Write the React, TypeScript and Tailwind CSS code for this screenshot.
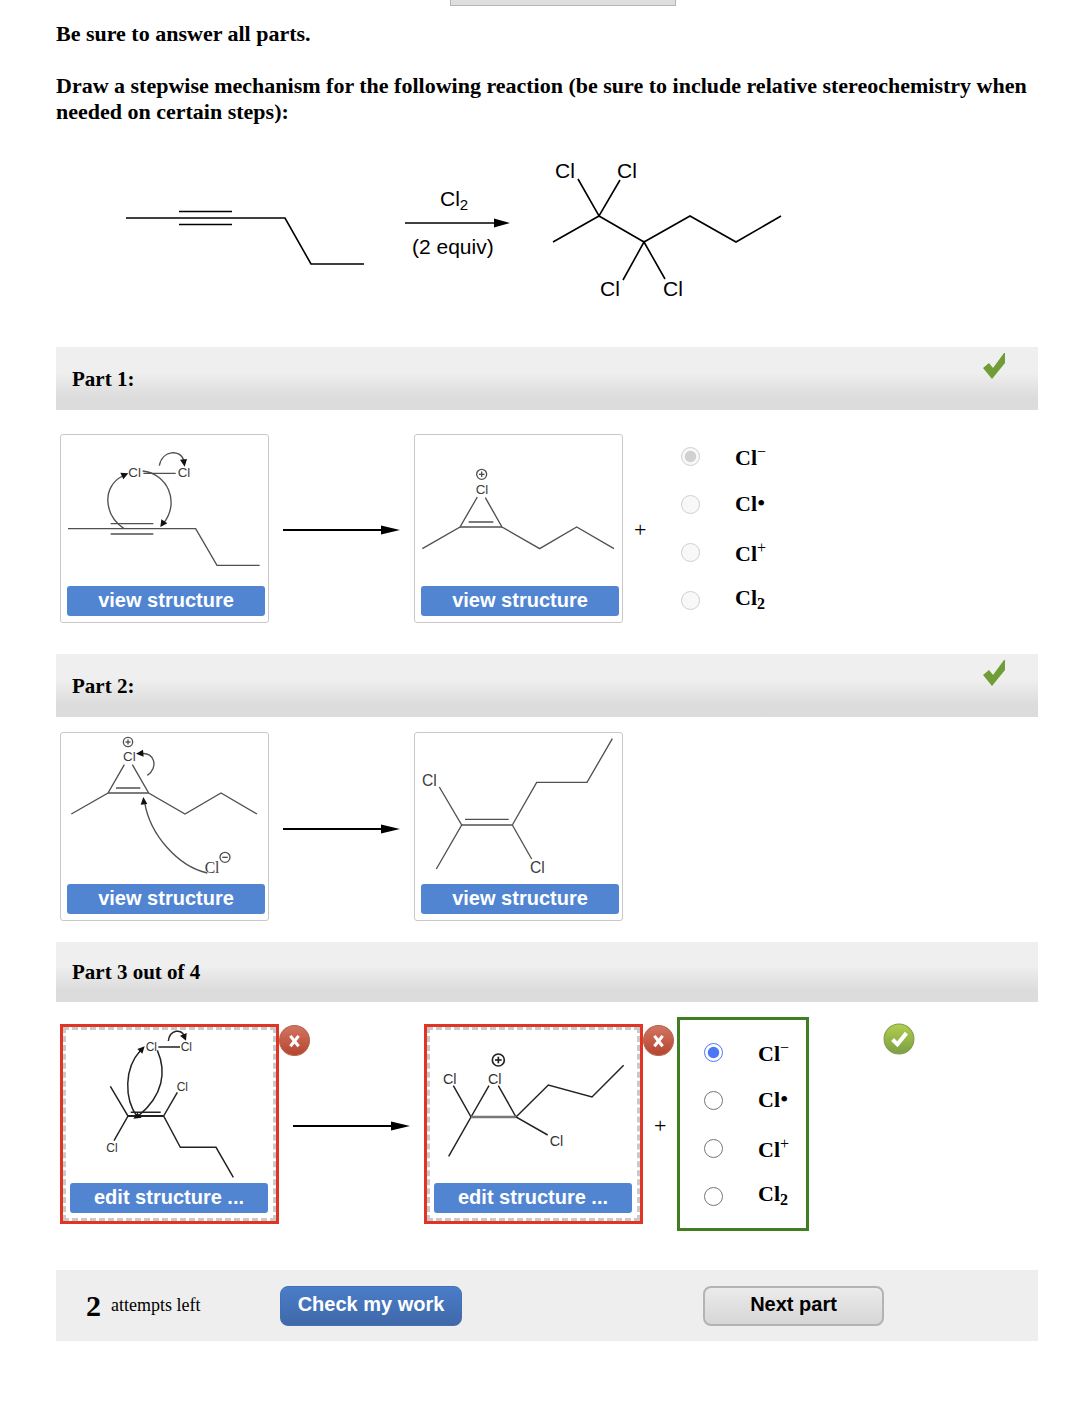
import { useState, type ReactNode } from 'react';

const SANS = "font-['Liberation_Sans',Arial,sans-serif]";

type Atom = { x: number; y: number; size: number; serif?: boolean };

/* ── Small drawing helpers for the structures ── */

function Cl({ x, y, size, serif }: Atom) {
  return (
    <text
      x={x}
      y={y}
      fontSize={size}
      stroke="none"
      fill="currentColor"
      className={serif ? "font-['Liberation_Serif',serif]" : SANS}
    >
      Cl
    </text>
  );
}

function Charge({ x, y, r, minus }: { x: number; y: number; r: number; minus?: boolean }) {
  const h = r * 0.55;
  return (
    <g>
      <circle cx={x} cy={y} r={r} />
      <path d={`M${x - h} ${y}h${h * 2}`} />
      {!minus && <path d={`M${x} ${y - h}v${h * 2}`} />}
    </g>
  );
}

function Head({ points }: { points: string }) {
  return <polygon points={points} fill="#111" stroke="none" />;
}

// Structures are drawn on a grid three times finer than the box they sit in
function Structure({ viewBox, label, dark, children }: { viewBox: string; label: string; dark?: boolean; children: ReactNode }) {
  return (
    <svg
      viewBox={viewBox}
      role="img"
      aria-label={label}
      className={dark ? 'block w-[198px] text-[#333]' : 'block w-[198px] text-[#3c3c3c]'}
      fill="none"
      stroke={dark ? '#222' : '#505050'}
      strokeWidth={dark ? 4.4 : 4}
    >
      {children}
    </svg>
  );
}

function AlkyneAttack() {
  return (
    <Structure viewBox="51 30 594 453" label="2-hexyne attacking chlorine">
      <path d="M54 311H437L501 421H629M182 296H310M182 327H310M280 145H377" />
      <Cl x={235} y={157} size={40} />
      <Cl x={383} y={157} size={40} />
      <path d="M222 311C160 268 156 184 218 153" />
      <Head points="235,145 211,143 220,163" />
      <path d="M278 138C352 146 390 230 342 293" />
      <Head points="331,306 334,283 352,295" />
      <path d="M328 122C336 75 392 72 401 106" />
      <Head points="404,125 390,104 411,102" />
    </Structure>
  );
}

function Chlorirenium() {
  return (
    <Structure viewBox="63 30 594 453" label="Chlorirenium ion">
      <path d="M67 371L180 306L232 216M256 218L306 306L419 371L530 306L642 371M206 291H280" />
      <path d="M180 306H306" strokeWidth={5} />
      <Cl x={227} y={207} size={40} />
      <Charge x={245} y={148} r={15} />
    </Structure>
  );
}

function ChlorideAttack() {
  return (
    <Structure viewBox="51 24 594 453" label="Chloride opening the chlorirenium ion">
      <path d="M64 267L174 204L223 119M247 119L296 204L405 267L513 204L621 267M198 189H271" />
      <path d="M174 204H296" strokeWidth={5} />
      <Cl x={219} y={108} size={40} />
      <Charge x={234} y={51} r={14} />
      <path d="M292 151C326 128 314 80 274 86" />
      <Head points="258,86 279,74 281,95" />
      <path d="M284 232C300 330 385 425 472 444" />
      <Head points="280,216 272,239 292,237" />
      <Cl x={464} y={443} size={47} serif />
      <Charge x={525} y={397} r={15} minus />
    </Structure>
  );
}

function Dichloroalkene() {
  return (
    <Structure viewBox="63 24 594 453" label="2,3-dichloro-2-hexene">
      <path d="M118 186L185 300L109 432M337 300L410 172H561L637 41M337 300L395 402M195 283H326" />
      <path d="M185 300H337" strokeWidth={5} />
      <Cl x={66} y={184} size={47} />
      <Cl x={390} y={444} size={47} />
    </Structure>
  );
}

function AlkeneAttack() {
  return (
    <Structure viewBox="60 45 594 459" label="Dichloroalkene attacking chlorine" dark>
      <path d="M181 214L234 303L192 377M382 232L341 303L391 397H498L550 487M242 292H332M325 96H390" />
      <path d="M234 303H341" strokeWidth={6} />
      <Cl x={287} y={108} size={36} />
      <Cl x={392} y={108} size={36} />
      <Cl x={380} y={228} size={36} />
      <Cl x={169} y={411} size={36} />
      <path d="M355 78C360 42 396 42 402 62" />
      <Head points="408,77 390,62 410,54" />
      <path d="M262 306C222 250 222 160 272 106" />
      <Head points="284,94 262,102 277,116" />
      <path d="M322 106C350 170 340 240 266 302" />
      <Head points="250,311 262,293 275,308" />
    </Structure>
  );
}

function ChloroniumProduct() {
  return (
    <Structure viewBox="57 45 594 459" label="Trichloro chloronium ion" dark>
      <path d="M115 212L168 306L101 424M222 212L168 306M250 212L303 306L398 360M303 306L400 210L531 246L626 151" />
      <path d="M168 306H303" strokeWidth={7} stroke="#777" />
      <Cl x={84} y={208} size={43} />
      <Cl x={219} y={208} size={43} />
      <Cl x={404} y={392} size={43} />
      <g strokeWidth={5}>
        <Charge x={250} y={135} r={18} />
      </g>
    </Structure>
  );
}

function ReactionScheme() {
  return (
    <svg
      viewBox="120 150 670 155"
      role="img"
      aria-label="2-hexyne with two equivalents of chlorine gives 2,2,3,3-tetrachlorohexane"
      className={`mt-[25px] ml-16 block w-[670px] max-w-full ${SANS}`}
      fill="none"
      stroke="#000"
      strokeWidth={1.6}
    >
      <path d="M126 218H285L311 264H364M179 211.5H232M179 224.5H232" />
      <path d="M405 223H496" />
      <polygon points="494,218.5 510,223 494,227.5" fill="#000" stroke="none" />
      <path d="M553 242L599 216L644 242L690 216L736 242L781 216M578 179L599 216L620 180M623 280L644 242L665 279" />
      <g fill="#000" stroke="none" fontSize={21}>
        <text x={440} y={206}>
          Cl<tspan dy={4} fontSize={15}>2</tspan>
        </text>
        <text x={412} y={254}>(2 equiv)</text>
        <text x={555} y={178}>Cl</text>
        <text x={617} y={178}>Cl</text>
        <text x={600} y={296}>Cl</text>
        <text x={663} y={296}>Cl</text>
      </g>
    </svg>
  );
}

/* ── Page pieces ── */

function Arrow() {
  return (
    <svg viewBox="0 0 117 14" className="mx-3.5 w-[117px] shrink-0" aria-hidden="true">
      <path d="M0 9H100" stroke="#000" strokeWidth={2} />
      <polygon points="98,4.5 117,9 98,13.5" />
    </svg>
  );
}

function CheckMark() {
  return (
    <svg viewBox="0 0 24 27" className="mt-1.5 mr-8 w-6 self-start" role="img" aria-label="Correct">
      <polygon points="1,15 7,10 11,15 22,0 23,0 23,10 10,26" fill="#709d35" />
    </svg>
  );
}

function PartBar({ title, done }: { title: string; done?: boolean }) {
  return (
    <div
      className={`flex items-center justify-between bg-linear-to-b from-[#efefef] from-40% to-[#dcdcdc] to-80% pl-4 ${done ? 'min-h-[63px]' : 'min-h-[60px]'}`}
    >
      <h2 className="pt-0.5 text-[21px] font-bold">{title}</h2>
      {done && <CheckMark />}
    </div>
  );
}

function StructureButton({ children }: { children: ReactNode }) {
  return (
    <button type="button" className={`block h-[30px] w-[198px] rounded-[3px] bg-[#5185d2] pb-0.5 text-[20px] leading-7 font-bold text-white ${SANS}`}>
      {children}
    </button>
  );
}

function ViewCard({ children }: { children: ReactNode }) {
  return (
    <div className="shrink-0 rounded-[3px] border border-[#c8c8c8] pr-[3px] pb-1.5 pl-1.5">
      {children}
      <StructureButton>view structure</StructureButton>
    </div>
  );
}

function EditCard({ children }: { children: ReactNode }) {
  return (
    <div className="relative shrink-0 border-3 border-[#e03524]">
      <div className="border-3 border-dashed border-[#c9c9c9] pr-[5px] pb-[5px] pl-1">
        {children}
        <StructureButton>edit structure ...</StructureButton>
      </div>
      <svg viewBox="0 0 30 30" className="absolute -top-0.5 -right-[34px] w-[31px]" role="img" aria-label="Incorrect">
        <defs>
          <linearGradient id="wrong" x1="0" y1="0" x2="0" y2="1">
            <stop offset="0" stopColor="#d27562" />
            <stop offset="1" stopColor="#b5452f" />
          </linearGradient>
        </defs>
        <circle cx="15" cy="15" r="14.5" fill="url(#wrong)" stroke="#b5654f" />
        <path d="M11 10.5L19 20.5M19 10.5L11 20.5" stroke="#fff" strokeWidth="3" />
      </svg>
    </div>
  );
}

function Plus() {
  return <span className="mx-[11px] w-3 shrink-0 pt-0.5 text-center text-[22px]">+</span>;
}

const SPECIES = [
  { id: 'anion', sup: true, mark: <sup className="-top-2 text-base font-normal">−</sup> },
  { id: 'radical', sup: false, mark: <span className="text-[24px] leading-none font-normal">•</span> },
  { id: 'cation', sup: true, mark: <sup className="-top-2 text-base font-normal">+</sup> },
  { id: 'chlorine', sup: false, mark: <sub className="text-base">2</sub> },
];

function SpeciesChoice({ name, disabled }: { name: string; disabled?: boolean }) {
  const [value, setValue] = useState('anion');

  return (
    <div role="radiogroup" aria-label="By-product">
      {SPECIES.map((s) => (
        <label key={s.id} className="flex h-12 items-center gap-[35px]">
          <input
            type="radio"
            name={name}
            value={s.id}
            checked={value === s.id}
            onChange={() => setValue(s.id)}
            disabled={disabled}
            className="size-[19px] accent-[#4c78f5]"
          />
          <span className={s.sup ? 'pt-1.5 text-[22px] leading-6 font-bold' : 'pb-0.5 text-[22px] leading-6 font-bold'}>
            Cl{s.mark}
          </span>
        </label>
      ))}
    </div>
  );
}

function CorrectBadge() {
  return (
    <svg viewBox="0 0 30 30" className="mt-1.5 ml-[74px] w-8 shrink-0 self-start" role="img" aria-label="Correct">
      <defs>
        <linearGradient id="right" x1="0" y1="0" x2="0" y2="1">
          <stop offset="0" stopColor="#b3cd4e" />
          <stop offset="1" stopColor="#7a9f45" />
        </linearGradient>
      </defs>
      <circle cx="15" cy="15" r="14" fill="url(#right)" stroke="#7f9c4c" />
      <path d="M9 15.5L13.5 20L22 9.5" stroke="#fff" strokeWidth="3.8" fill="none" />
    </svg>
  );
}

export default function App() {
  return (
    <main className="bg-white pr-[38px] pb-[61px] pl-14 font-['Liberation_Serif','Times_New_Roman',serif] text-black">
      {/* Lower edge of the toolbar tab */}
      <div className="ml-[394px] h-1.5 w-[226px] border border-t-0 border-[#b5b5b5] bg-[#dedede]" />

      <div className="pt-[15px] text-[22px] leading-[26px] font-bold">
        <p>Be sure to answer all parts.</p>
        <p className="mt-[26px]">
          Draw a stepwise mechanism for the following reaction (be sure to include relative stereochemistry when needed
          on certain steps):
        </p>
      </div>

      <ReactionScheme />

      <section className="mt-[42px]">
        <PartBar title="Part 1:" done />
        <div className="mt-[22px] flex items-center pl-1">
          <ViewCard>
            <AlkyneAttack />
          </ViewCard>
          <Arrow />
          <ViewCard>
            <Chlorirenium />
          </ViewCard>
          <Plus />
          <div className="ml-6">
            <SpeciesChoice name="part1" disabled />
          </div>
        </div>
      </section>

      <section className="mt-[30px]">
        <PartBar title="Part 2:" done />
        <div className="mt-[15px] flex items-center pl-1">
          <ViewCard>
            <ChlorideAttack />
          </ViewCard>
          <Arrow />
          <ViewCard>
            <Dichloroalkene />
          </ViewCard>
        </div>
      </section>

      <section className="mt-[21px]">
        <PartBar title="Part 3 out of 4" />
        <div className="mt-[15px] flex items-center pl-1">
          <EditCard>
            <AlkeneAttack />
          </EditCard>
          <Arrow />
          <EditCard>
            <ChloroniumProduct />
          </EditCard>
          <Plus />
          <div className="border-3 border-[#417d23] py-2 pr-[17px] pl-6">
            <SpeciesChoice name="part3" />
          </div>
          <CorrectBadge />
        </div>
      </section>

      <footer className="mt-[39px] flex h-[71px] items-center bg-[#eee]">
        <p className="flex w-56 items-center gap-2.5 pl-[30px] text-[18px]">
          <b className="text-[30px]">2</b> attempts left
        </p>
        <button
          type="button"
          className={`h-10 w-[182px] rounded-lg border border-[#4470b3] bg-linear-to-b from-[#4b7dca] to-[#3f68a8] pb-1 text-[20px] font-bold text-white ${SANS}`}
        >
          Check my work
        </button>
        <button
          type="button"
          className={`ml-[241px] h-10 w-[181px] rounded-lg border-2 border-[#b3b3b3] bg-linear-to-b from-[#ebebeb] to-[#d6d6d6] pb-1 text-[20px] font-bold ${SANS}`}
        >
          Next part
        </button>
      </footer>
    </main>
  );
}
